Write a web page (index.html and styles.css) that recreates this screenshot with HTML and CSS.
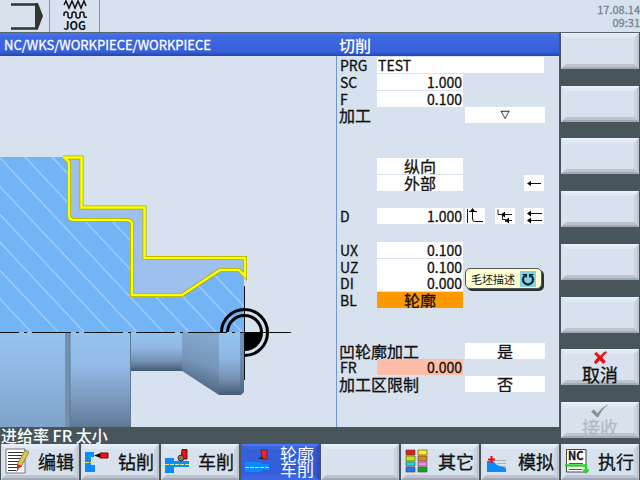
FILE: index.html
```html
<!DOCTYPE html>
<html lang="zh-CN">
<head>
<meta charset="utf-8">
<title>切削</title>
<link rel="stylesheet" href="styles.css">
</head>
<body>
<div class="screen">
  <header class="status">
    <div class="status-cell">
      <svg class="area-icon" viewBox="0 0 34 28" aria-hidden="true">
        <path d="M1 1.5H28M1 25.5H28" fill="none" stroke="#333" stroke-width="2.6"/>
        <path d="M25 0h3l5 13-5 13h-3z" fill="#333"/>
      </svg>
    </div>
    <div class="status-cell mode">
      <svg class="mode-icon" viewBox="0 0 24 20" aria-hidden="true">
        <path d="M1 5l2-4 3 7 3-7 3 7 3-7 3 7 3-7 2 5" fill="none" stroke="#111" stroke-width="1.5"/>
        <path d="M1 16v-2q0-2 2-2t2 2v2q0 2 2 2t2-2v-2q0-2 2-2t2 2v2q0 2 2 2t2-2v-2q0-2 2-2t2 2v2q0 2 3 1" fill="none" stroke="#111" stroke-width="1.5"/>
      </svg>
      <span>JOG</span>
    </div>
    <div class="clock"><span>17.08.14</span><span>09:31</span></div>
  </header>

  <div class="titlebar">
    <div class="path">NC/WKS/WORKPIECE/WORKPIECE</div>
    <h1>切削</h1>
  </div>

  <main class="work">
    <svg class="drawing" viewBox="0 56 336 371" preserveAspectRatio="xMinYMin slice" role="img" aria-label="轮廓">
      <defs>
        <linearGradient id="g1" x1="0" y1="0" x2="0" y2="1"><stop offset="0" stop-color="#95c5f0"/><stop offset=".45" stop-color="#8eb6e2"/><stop offset="1" stop-color="#7fa4ca"/></linearGradient>
        <linearGradient id="g2" x1="0" y1="0" x2="0" y2="1"><stop offset="0" stop-color="#94c4f0"/><stop offset=".35" stop-color="#93bae8"/><stop offset=".65" stop-color="#7f9fc4"/><stop offset="1" stop-color="#5d7a96"/></linearGradient>
        <linearGradient id="g3" x1="0" y1="0" x2="0" y2="1"><stop offset="0" stop-color="#94c4f0"/><stop offset=".4" stop-color="#91b7e3"/><stop offset=".75" stop-color="#7491b3"/><stop offset="1" stop-color="#435970"/></linearGradient>
        <linearGradient id="g4" x1="0.2" y1="0" x2="0" y2="1"><stop offset="0" stop-color="#82a8d0"/><stop offset=".4" stop-color="#7897ba"/><stop offset="1" stop-color="#3c5168"/></linearGradient>
        <clipPath id="part"><path d="M0 157H66L69 162V220H131V295H182L220 270H244V332H0z"/></clipPath>
      </defs>
      <path d="M66 157H81V208H144V258H244V270H220L182 295H131V220H69V162z" fill="#9dc0ef"/>
      <path d="M0 157H66L69 162V220H131V295H182L220 270H244V332H0z" fill="#73b4f7"/>
      <path clip-path="url(#part)" d="M-133 157L31 332M-107 157L58 332M-80 157L84 332M-54 157L110 332M-28 157L137 332M-1 157L163 332M25 157L189 332M52 157L216 332M78 157L242 332M104 157L268 332M131 157L295 332" fill="none" stroke="#a2cdfa" stroke-width="1.4"/>
      <path d="M0 332H65V427H0z" fill="url(#g1)"/>
      <path d="M65 332H70V427H65z" fill="#7390ae"/>
      <path d="M70 332H131V427H70z" fill="url(#g2)"/>
      <path d="M70 332V427M130.500 332V427" stroke="#5f7a96" fill="none"/>
      <path d="M131 332H182V371H131z" fill="url(#g3)"/>
      <path d="M182 332H219V395L182 371z" fill="url(#g4)"/>
      <path d="M219 332H244V392L241 395H219z" fill="url(#g3)"/>
      <path d="M240 332H244V392L240 395z" fill="#4f6b88" opacity=".55"/>
      <g fill="none">
        <path d="M63 157.500H81.500V207.500H144.500V258H245V276L239 270H220L182 295H132V225Q132 220 127 220H74Q69 220 69 215V162L65 158" stroke="#a9a900" stroke-width="4"/>
        <path d="M63 157.500H81.500V207.500H144.500V258H245V276L239 270H220L182 295H132V225Q132 220 127 220H74Q69 220 69 215V162L65 158" stroke="#ff0" stroke-width="2.500"/>
      </g>
      <path d="M0 332.500H244" stroke="#111" stroke-dasharray="19 5 3 5 20 0" fill="none"/>
      <path d="M244 332.500H291M244.500 286V380" stroke="#111" fill="none"/>
      <g fill="none" stroke="#000" stroke-width="3">
        <path d="M221.500 332A23 23 0 1 1 244.500 355.500"/>
        <path d="M227.500 332A17 17 0 1 1 244.500 349.500"/>
      </g>
      <path d="M244.500 332H262A17.500 17.500 0 0 1 244.500 350z"/>
    </svg>

    <form class="params">
      <label class="r1" for="prg">PRG</label><input class="r1 wide left" id="prg" value="TEST">
      <label class="r2" for="sc">SC</label><input class="r2 mid" id="sc" value="1.000">
      <label class="r3" for="f">F</label><input class="r3 mid" id="f" value="0.100">
      <label class="r4 cjk" for="op">加工</label><select class="r4 end symbol" id="op"><option>▽</option></select>
      <select class="r7 mid" aria-label="方向"><option>纵向</option></select>
      <select class="r8 mid" aria-label="位置"><option>外部</option></select>
      <div class="r8 end icons">
        <button type="button" class="last" aria-label="方向"><svg viewBox="0 0 20 16"><path d="M5 8.500H17" stroke="#111"/><path d="M3 8.500l4-2.500v5z"/></svg></button>
      </div>
      <label class="r10" for="d">D</label><input class="r10 mid" id="d" value="1.000">
      <div class="r10 end icons">
        <button type="button" aria-label="退刀"><svg viewBox="0 0 20 16"><path d="M2.500 1V15M7.500 2V11Q7.500 13.500 10 13.500H18M4 3.500H12" fill="none" stroke="#111"/><path d="M7.500 0l3 4h-6z"/></svg></button>
        <button type="button" aria-label="切削分段"><svg viewBox="0 0 20 16"><path d="M3 1.500V6.500H7.500V11.500H10.500V14M7 6.500H17M11 12.500H17" fill="none" stroke="#222"/><path d="M6 6.500l4-3v6zM10 12.500l4-3v6z"/></svg></button>
        <button type="button" aria-label="平行切削"><svg viewBox="0 0 20 16"><path d="M5 5.500H18M5 12.500H18" stroke="#111"/><path d="M3 5.500l4-3v6zM3 12.500l4-3v6z"/></svg></button>
      </div>
      <label class="r12" for="ux">UX</label><input class="r12 mid" id="ux" value="0.100">
      <label class="r13" for="uz">UZ</label><input class="r13 mid" id="uz" value="0.100">
      <label class="r14" for="di">DI</label><input class="r14 mid" id="di" value="0.000">
      <label class="r15" for="bl">BL</label><select class="r15 mid active" id="bl"><option>轮廓</option></select>
      <label class="r18 long cjk" for="relief">凹轮廓加工</label><select class="r18 end" id="relief"><option>是</option></select>
      <label class="r19" for="fr">FR</label><input class="r19 mid error" id="fr" value="0.000">
      <label class="r20 long cjk" for="limit">加工区限制</label><select class="r20 end" id="limit"><option>否</option></select>
      <div class="tip" role="tooltip">毛坯描述
        <svg viewBox="0 0 16 16" aria-hidden="true"><path d="M0 0H16V16H0z" fill="#7fd4e0"/><path d="M4.500 5A5 5 0 1 0 11.500 5" fill="none" stroke="#123" stroke-width="2.200"/><path d="M2 3H7V7zM14 3H9V7z" fill="#123"/></svg>
      </div>
    </form>
  </main>

  <div class="message">进给率 FR 太小</div>

  <nav class="side" aria-label="操作">
    <button class="key" aria-label="1"></button>
    <button class="key" aria-label="2"></button>
    <button class="key" aria-label="3"></button>
    <button class="key" aria-label="4"></button>
    <button class="key" aria-label="5"></button>
    <button class="key" aria-label="6"></button>
    <button class="key stack"><svg viewBox="0 0 16 14"><path d="M1 3l3-2q2 3 4 4 3-4 6-5l1 2q-3 2-5 5 2 3 4 4l-3 3q-2-3-4-4-2 3-4 4l-2-2q2-3 4-5-2-2-4-4z" fill="#f00d0d"/></svg><span>取消</span></button>
    <button class="key stack" disabled><svg viewBox="0 0 20 14"><path d="M0 8l3-2 4 4Q13 2 20 0 12 5 8 14H6z" fill="#8d8f8e"/></svg><span>接收</span></button>
  </nav>

  <nav class="bottom" aria-label="菜单">
    <button class="key"><svg viewBox="0 0 24 26"><path d="M1 1H20V25H1z" fill="#fff" stroke="#777"/><path d="M3 4.500H18M3 7.500H18M3 10.500H18M3 13.500H18M3 16.500H14M3 19.500H12M3 22.500H11" stroke="#333"/><path d="M20 2l4 2-8 15-4-2z" fill="#ddc45a" stroke="#75652a" stroke-width=".7"/><path d="M12 16l5 2-5 4z" fill="#e82020"/><path d="M12 22l-1 2 3-3z"/></svg><span>编辑</span></button>
    <button class="key"><svg viewBox="0 0 24 26"><path d="M0 4H9V9H6V17H10V24H0z" fill="#0a8cff"/><path d="M0 14.500H10" stroke="#d7e76a" stroke-dasharray="4 1"/><path d="M9 7.500L16 5V10z"/><path d="M15 5H23V10H15z" fill="#f01010" stroke="#611"/></svg><span>钻削</span></button>
    <button class="key"><svg viewBox="0 0 24 26"><path d="M0 10H9V13H24V19H9V25H0z" fill="#0a8cff"/><path d="M0 16.500H24" stroke="#e0e67a" stroke-dasharray="4 1"/><path d="M17 1.500H22V11H16z" fill="#f01010" stroke="#611"/><circle cx="16" cy="10" r="3" fill="#8a7565" stroke="#333"/></svg><span>车削</span></button>
    <button class="key selected"><svg viewBox="0 0 24 26"><path d="M0 14H14L18 16H24V22H18L14 24H0z" fill="#0a8cff"/><path d="M0 19.500H24" stroke="#d6df66" stroke-dasharray="4 1"/><path d="M16 2H22V11H17z" fill="#f02828" stroke="#622"/><path d="M13 11l4-3 1 3z" fill="#222"/></svg><span>轮廓<br>车削</span></button>
    <button class="key" aria-label="5"></button>
    <button class="key"><svg viewBox="0 0 24 26"><g stroke="#555" stroke-width=".7"><path d="M1 2H10V7H1z" fill="#f01414"/><path d="M13 2H22V7H13z" fill="#ffee18"/><path d="M1 8H10V13H1z" fill="#b9f000"/><path d="M13 8H22V13H13z" fill="#e87c28"/><path d="M1 14H10V18H1z" fill="#12dde2"/><path d="M13 14H22V18H13z" fill="#f88bea"/><path d="M1 19H10V24H1z" fill="#2870ee"/><path d="M13 19H22V24H13z" fill="#0fa51a"/></g></svg><span>其它</span></button>
    <button class="key"><svg viewBox="0 0 24 26"><path d="M8 12.500H21M12 15.500H21M15 18.500H21" stroke="#b5ada0"/><path d="M2 13H8L12 17 21 20V24H2z" fill="#0a8cff"/><path d="M6.500 8V15M3 11.500H10" stroke="#f00" stroke-width="2"/></svg><span>模拟</span></button>
    <button class="key"><span class="nc-icon"><b>NC</b><svg viewBox="0 0 24 26"><path d="M1.500 1.500H21V24H1.500z" fill="#fff" stroke="#444"/><path d="M4 15.500H18M4 21.500H17" stroke="#555"/><path d="M0 17.500H21V23" fill="none" stroke="#28d428" stroke-width="2.500"/><path d="M17 21.500H25L21 26z" fill="#28d428"/></svg></span><span>执行</span></button>
  </nav>
</div>
</body>
</html>
```
FILE: styles.css
```css
* { box-sizing: border-box; }

body {
  margin: 0;
  background: #48555b;
  color: #111;
  font: 16px/16px "Noto Sans CJK SC", sans-serif;
}

h1, button, input, select { font: inherit; color: inherit; margin: 0; }

.screen {
  display: grid;
  grid-template-columns: minmax(0, 1fr) 81px;
  grid-template-rows: 33px 23px minmax(0, 1fr) 16px 37px;
  height: 100vh;
}

.status {
  grid-column: 1 / -1;
  display: flex;
  background: #d7e2ee;
  border-bottom: 1px solid #5a666e;
}

.status-cell {
  display: flex;
  flex-direction: column;
  align-items: center;
  width: 50px;
  padding-top: 3px;
  border-right: 1px solid #8b959f;
}

.mode { padding-top: 0; font-size: 11px; line-height: 11px; font-weight: bold; }
.area-icon { width: 34px; height: 28px; margin-left: 4px; }
.mode-icon { width: 24px; height: 20px; }

.clock {
  margin-left: auto;
  display: flex;
  flex-direction: column;
  align-items: flex-end;
  padding-top: 3px;
  font-size: 11px;
  line-height: 13px;
  color: #76838e;
  -webkit-text-stroke: 0.3px;
}

.titlebar {
  display: grid;
  grid-template-columns: minmax(0, 1fr) 223px;
  align-items: center;
  background: linear-gradient(#4774f2, #3c68e0 20%, #3860da 80%, #2744ae);
  color: #fff;
}

.titlebar h1 { padding-left: 3px; font-weight: 500; }

.path {
  padding-left: 4px;
  font-size: 13px;
  white-space: nowrap;
  -webkit-text-stroke: 0.3px;
}

.work {
  grid-column: 1;
  display: grid;
  grid-template-columns: minmax(0, 1fr) 223px;
  min-height: 0;
  background: #d7e2ee;
}

.drawing { display: block; width: 100%; height: 100%; min-height: 0; }

.params {
  position: relative;
  display: grid;
  grid-template-columns: 37px 86px 80px;
  grid-template-rows: repeat(20, minmax(0, 1fr));
  column-gap: 1px;
  padding: 1px 0 34px 2px;
  border-left: 1px solid #6f97d2;
  min-height: 0;
}

label {
  grid-column: 1;
  padding-left: 1px;
  font-size: 14px;
  white-space: nowrap;
  -webkit-text-stroke: 0.3px;
}

.cjk { font-size: 16px; padding-left: 0; }
.long { grid-column: 1 / 3; }

input, select {
  appearance: none;
  min-width: 0;
  width: 100%;
  height: 16px;
  padding: 0 1px;
  border: 0;
  border-radius: 0;
  background: #fff;
  line-height: 16px;
  text-align: right;
  -webkit-text-stroke: 0.3px;
}

input { font-size: 14px; }
select { padding: 0; text-align: center; text-align-last: center; }
.symbol { font-size: 9px; }
.mid { grid-column: 2; }
.end { grid-column: 3; margin-left: 1px; }
.wide { grid-column: 2 / 4; }
.left { text-align: left; }
select.active { background: #ff9900; }
input.error { background: #ffbda8; }

.r1 { grid-row: 1; }
.r2 { grid-row: 2; }
.r3 { grid-row: 3; }
.r4 { grid-row: 4; }
.r7 { grid-row: 7; }
.r8 { grid-row: 8; }
.r10 { grid-row: 10; }
.r12 { grid-row: 12; }
.r13 { grid-row: 13; }
.r14 { grid-row: 14; }
.r15 { grid-row: 15; }
.r18 { grid-row: 18; }
.r19 { grid-row: 19; }
.r20 { grid-row: 20; }

.icons { display: flex; justify-content: space-between; }
.icons button { width: 20px; height: 16px; padding: 0; border: 0; background: #fff; }
.icons .last { margin-left: auto; }
.icons svg { display: block; width: 20px; height: 16px; }

.tip {
  position: absolute;
  left: 128px;
  top: 212px;
  display: flex;
  align-items: center;
  gap: 5px;
  height: 21px;
  padding: 0 5px;
  border: 1px solid #555;
  border-radius: 5px;
  background: #ffffd2;
  box-shadow: 2px 2px 0 #26313a;
  font-size: 11px;
  white-space: nowrap;
}

.tip svg { width: 16px; height: 16px; }

.message {
  grid-column: 1;
  padding-left: 1px;
  color: #fff;
  font-weight: 500;
}

.side {
  grid-column: 2;
  grid-row: 2 / 5;
  display: flex;
  flex-direction: column;
  justify-content: space-between;
  padding: 0 1px 5px 2px;
}

.key {
  position: relative;
  display: flex;
  align-items: center;
  height: 36px;
  padding: 0;
  border: 2px solid;
  border-color: #e9effa #c0c5d1 #a3a8b4 #d9dfeb;
  background: #d7e2ee;
  font-size: 18px;
  line-height: 18px;
  -webkit-text-stroke: 0.3px;
}

.key::before {
  content: "";
  position: absolute;
  inset: 0;
  border: 3px solid;
  border-color: #e0e9f5 #cbd3df #bcc3cf #dae3ef;
}

.key > * { position: relative; }

.stack {
  flex-direction: column;
  justify-content: flex-end;
  gap: 1px;
}

.stack svg { height: 13px; flex: none; }
.key:disabled { color: #b4bac4; }

.bottom {
  grid-column: 1 / -1;
  display: grid;
  grid-template-columns: repeat(8, minmax(0, 1fr));
  column-gap: 2px;
  padding: 1px 1px 0;
}

.bottom .key { justify-content: space-between; padding: 0 3px 2px 2px; }
.bottom svg { display: block; width: 24px; height: 26px; flex: none; }

.bottom .selected {
  border-color: #4878f5 #2c4fc0 #3a65e8 #3560dc;
  background: #355fda;
  color: #fff;
  font-size: 17px;
  line-height: 15px;
  -webkit-text-stroke: 0;
}

.selected::before { border-color: #3a66e2 #3158cc #3a66e6 #365fdb; }

.nc-icon { position: relative; }

.nc-icon b {
  position: absolute;
  left: 3px;
  top: 2px;
  z-index: 1;
  font-size: 11px;
  line-height: 11px;
}
```
